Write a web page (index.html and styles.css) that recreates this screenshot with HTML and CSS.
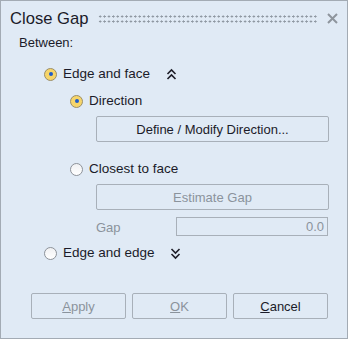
FILE: index.html
```html
<!DOCTYPE html>
<html lang="en">
<head>
    <meta charset="UTF-8">
    <meta name="viewport" content="width=device-width, initial-scale=1.0">
    <title>Close Gap</title>
    <link rel="stylesheet" href="styles.css">
</head>
<body>
    <div class="dialog">
        <div class="titleBar">
            <span class="title">Close Gap</span>
            <span class="grip"></span>
            <svg class="closeIcon" width="11" height="11" viewBox="0 0 11 11">
                <path d="M1 1 L10 10 M10 1 L1 10" stroke="#8e959d" stroke-width="2" fill="none"/>
            </svg>
        </div>

        <div class="content">
            <div class="groupLabel">Between:</div>

            <div class="option level1 first">
                <span class="radio checked"></span>
                <span class="optionText">Edge and face</span>
                <svg class="chevron" width="11" height="13" viewBox="0 0 11 13">
                    <path d="M1.5 6 L5.5 2 L9.5 6 M1.5 11 L5.5 7 L9.5 11" stroke="#1e1e28" stroke-width="1.6" fill="none"/>
                </svg>
            </div>

            <div class="option level2 direction">
                <span class="radio checked"></span>
                <span class="optionText">Direction</span>
            </div>
            <button class="wideButton defineButton">Define / Modify Direction...</button>

            <div class="option level2 closest">
                <span class="radio"></span>
                <span class="optionText">Closest to face</span>
            </div>
            <button class="wideButton estimateButton" disabled>Estimate Gap</button>

            <div class="gapRow">
                <span class="gapLabel">Gap</span>
                <div class="gapInput">0.0</div>
            </div>

            <div class="option level1 edgeEdge">
                <span class="radio"></span>
                <span class="optionText">Edge and edge</span>
                <svg class="chevron chevronDown" width="11" height="13" viewBox="0 0 11 13">
                    <path d="M1.5 2 L5.5 6 L9.5 2 M1.5 7 L5.5 11 L9.5 7" stroke="#1e1e28" stroke-width="1.6" fill="none"/>
                </svg>
            </div>
        </div>

        <div class="footer">
            <button class="footButton" disabled><u>A</u>pply</button>
            <button class="footButton" disabled><u>O</u>K</button>
            <button class="footButton"><u>C</u>ancel</button>
        </div>
    </div>
</body>
</html>
```

FILE: styles.css
```css
* {
    margin: 0;
    padding: 0;
    box-sizing: border-box;
}
body {
    background-color: #e0eaf5;
    font-family: "Liberation Sans", Arial, sans-serif;
    font-size: 13px;
    line-height: 16px;
    color: #1b1b29;
}
.dialog {
    width: 348px;
    height: 339px;
    border: 1px solid #a3abb4;
    background-color: #e0eaf5;
    display: flex;
    flex-direction: column;
}
.titleBar {
    display: flex;
    align-items: center;
    height: 34px;
    padding: 1px 9px 0 9px;
}
.title {
    font-size: 16.6px;
    line-height: 20px;
}
.grip {
    flex: 1;
    height: 10px;
    margin: 0 9px 0 10px;
    background-image: radial-gradient(circle, #8f98a2 0.9px, transparent 1.3px);
    background-size: 4.4px 5px;
    background-position: 0 0;
}
.closeIcon {
    display: block;
}
.content {
    padding: 0 19px 0 18px;
    display: flex;
    flex-direction: column;
}
.option {
    display: flex;
    align-items: center;
    height: 20px;
}
.optionText {
    font-size: 13.5px;
}
.option.first {
    margin-top: 13px;
}
.level1 {
    padding-left: 25px;
}
.level2 {
    padding-left: 51px;
}
.direction {
    margin-top: 7px;
}
.closest {
    margin-top: 17px;
}
.edgeEdge {
    margin-top: 7px;
}
.radio {
    width: 13px;
    height: 13px;
    border-radius: 50%;
    border: 1px solid #8d9299;
    background: linear-gradient(#f0f1f3, #ffffff);
    margin-right: 6px;
    position: relative;
}
.radio.checked {
    background: #f6d56a;
    border-color: #9a8e6a;
}
.radio.checked::after {
    content: "";
    position: absolute;
    left: 3.5px;
    top: 3.5px;
    width: 4px;
    height: 4px;
    border-radius: 50%;
    background-color: #1f5cc8;
}
.chevron {
    display: block;
    margin-left: 16px;
}
.chevronDown {
    margin-left: 15px;
}
button {
    font-family: "Liberation Sans", Arial, sans-serif;
    font-size: 13px;
    color: #1b1b29;
    background-color: #e0eaf5;
    border: 1px solid #a8b0b9;
    border-radius: 2px;
}
button:disabled {
    color: #8b939c;
}
.wideButton {
    margin-left: 77px;
    width: 233px;
    height: 26px;
    margin-top: 5px;
}
.gapRow {
    display: flex;
    align-items: center;
    margin-left: 77px;
    margin-top: 6px;
    height: 20px;
}
.gapLabel {
    width: 80px;
    color: #8b939c;
    padding-top: 3px;
}
.gapInput {
    width: 153px;
    height: 19px;
    border: 1px solid #a8b0b9;
    color: #8b939c;
    text-align: right;
    padding-right: 3px;
    line-height: 17px;
}
.footer {
    display: flex;
    gap: 6px;
    justify-content: flex-end;
    padding-right: 19px;
    margin-top: 30px;
}
.footButton {
    width: 95px;
    height: 26px;
}
```
